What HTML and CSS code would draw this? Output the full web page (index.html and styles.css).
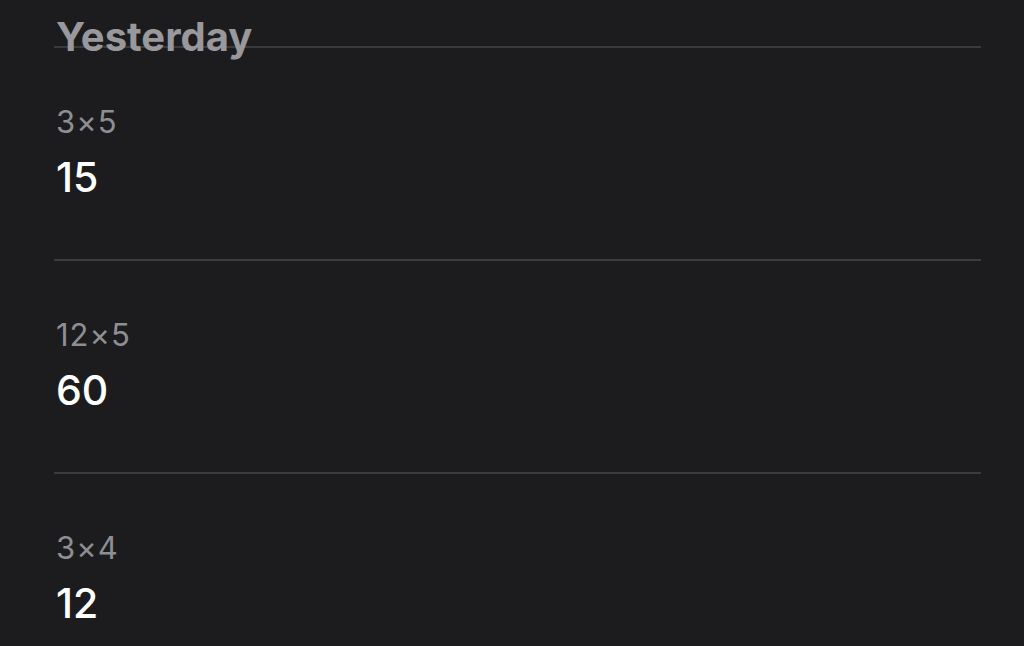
FILE: index.html
```html
<!DOCTYPE html>
<html lang="en">
<head>
<meta charset="utf-8">
<title>History</title>
<link rel="stylesheet" href="styles.css">
</head>
<body>
<main class="list">
  <header class="section-header">
    <h2 class="section-title">Yesterday</h2>
  </header>
  <div class="row">
    <div class="expr">3×5</div>
    <div class="result">15</div>
  </div>
  <div class="row">
    <div class="expr">12×5</div>
    <div class="result">60</div>
  </div>
  <div class="row">
    <div class="expr">3×4</div>
    <div class="result">12</div>
  </div>
</main>
</body>
</html>
```

FILE: styles.css
```css
html, body {
  margin: 0;
  padding: 0;
  background: #1c1c1e;
  height: 100%;
  overflow: hidden;
}
body {
  font-family: Inter, "Liberation Sans", sans-serif;
}
.list {
  padding: 0 43px 0 54px;
}
.section-header {
  height: 29px;
  padding-top: 17px;
  border-bottom: 2px solid #3a3a3c;
}
.section-title {
  margin: 0;
  font-size: 40px;
  line-height: 40px;
  font-weight: 700;
  color: #98989d;
  padding-left: 2px;
}
.row {
  padding: 59px 0 61px 2px;
  border-bottom: 2px solid #3c3c3e;
}
.expr {
  font-size: 31px;
  line-height: 30px;
  letter-spacing: 1px;
  color: #8e8e93;
}
.result {
  margin-top: 20px;
  font-size: 41px;
  line-height: 41px;
  font-weight: 500;
  color: #ffffff;
}
```
